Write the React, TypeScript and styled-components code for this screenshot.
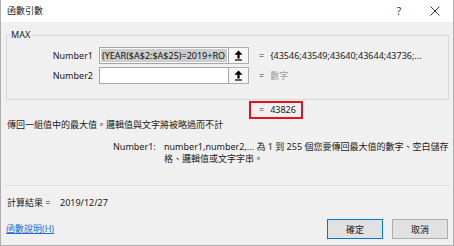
import React from "react";
import styled, { createGlobalStyle } from "styled-components";

const Global = createGlobalStyle`
  html, body { margin: 0; padding: 0; background: #f0f0f0; }
  body {
    font-family: "Noto Sans", "Noto Sans CJK TC", sans-serif;
    font-size: 9px;
    color: #1a1a1a;
  }
  * { box-sizing: border-box; }
`;

const Window = styled.div`
  width: 454px;
  height: 246px;
  display: flex;
  flex-direction: column;
  background: #f0f0f0;
  border-left: 1px solid #aeaeae;
  border-right: 1px solid #aeaeae;
  border-bottom: 1px solid #aeaeae;
  overflow: hidden;
`;

const TitleBar = styled.div`
  height: 22px;
  flex: none;
  display: flex;
  align-items: center;
  background: #ffffff;
  padding-left: 6px;
`;

const Title = styled.span`
  line-height: 12px;
  color: #222;
`;

const TitleButton = styled.div<{ $first?: boolean }>`
  width: 36px;
  height: 22px;
  display: flex;
  align-items: center;
  justify-content: center;
  margin-left: ${(p) => (p.$first ? "auto" : "0")};
  color: #333;
  font-size: 10px;
`;

const Content = styled.div`
  flex: 1;
  display: flex;
  flex-direction: column;
  padding: 0 4px 0 5px;
`;

const Group = styled.fieldset`
  margin: 7px 0 0;
  padding: 6px 0 15px;
  border: 1px solid #dadada;
  min-width: 0;
  display: flex;
  flex-direction: column;
  gap: 3px;
`;

const Legend = styled.legend`
  margin-left: 3px;
  padding: 0 1px;
  line-height: 12px;
  font-size: 9px;
  color: #222;
`;

const ArgRow = styled.div`
  display: flex;
  align-items: center;
  height: 17px;
`;

const ArgLabel = styled.div`
  width: 86px;
  text-align: right;
  line-height: 12px;
`;

const InputBox = styled.div`
  width: 130px;
  height: 17px;
  margin-left: 6px;
  border: 1px solid #a6a6a6;
  background: #ffffff;
  padding: 1px;
  overflow: hidden;
  display: flex;
`;

const InputText = styled.div<{ $selected?: boolean }>`
  flex: 1;
  min-width: 0;
  white-space: nowrap;
  overflow: hidden;
  line-height: 13px;
  padding-left: 1px;
  background: ${(p) => (p.$selected ? "#cdcdcd" : "transparent")};
  color: #111;
`;

const ArrowButton = styled.div`
  width: 20px;
  height: 17px;
  border: 1px solid #adadad;
  border-left: none;
  background: #f7f7f7;
  display: flex;
  align-items: center;
  justify-content: center;
`;

const Eq = styled.span`
  margin-left: 10px;
  line-height: 12px;
  color: #333;
`;

const ArgValue = styled.span<{ $hint?: boolean }>`
  margin-left: 6px;
  line-height: 12px;
  white-space: nowrap;
  color: ${(p) => (p.$hint ? "#a0a0a0" : "#1a1a1a")};
`;

const ResultBox = styled.div`
  margin: 1px 0 0 243px;
  width: 54px;
  height: 18px;
  border: 2px solid #e0141e;
  display: flex;
  align-items: center;
  padding-left: 8px;
`;

const ResultEq = styled.span`
  line-height: 12px;
  color: #333;
`;

const Description = styled.div`
  padding-left: 1px;
  line-height: 12px;
`;

const ArgHelp = styled.div`
  margin-top: 10px;
  display: flex;
  padding-left: 107px;
  line-height: 12px;
`;

const ArgHelpLabel = styled.div`
  width: 51px;
  flex: none;
`;

const ArgHelpText = styled.div`
  white-space: nowrap;
`;

const Separator = styled.div`
  margin-top: 20px;
  border-top: 1px solid #dcdcdc;
  border-bottom: 1px solid #f8f8f8;
`;

const ResultLine = styled.div`
  margin-top: 10px;
  padding-left: 1px;
  display: flex;
  line-height: 12px;
`;

const ResultLabel = styled.span`
  width: 53px;
`;

const Footer = styled.div`
  margin-top: 10px;
  display: flex;
  align-items: center;
  padding-right: 1px;
`;

const HelpLink = styled.a`
  color: #1f6fd0;
  text-decoration: underline;
  line-height: 12px;
  cursor: pointer;
`;

const Buttons = styled.div`
  margin-left: auto;
  display: flex;
  gap: 9px;
`;

const DialogButton = styled.button<{ $default?: boolean }>`
  width: 56px;
  height: 20px;
  padding: 0;
  font: inherit;
  color: #1a1a1a;
  background: #e1e1e1;
  border: 1px solid ${(p) => (p.$default ? "#0078d7" : "#adadad")};
`;

const UploadIcon = () => (
  <svg width="9" height="11" viewBox="0 0 9 11">
    <polygon points="4.5,0.5 8.5,4.8 0.5,4.8" fill="#000" />
    <rect x="3.4" y="4.5" width="2.2" height="4" fill="#000" />
    <rect x="1" y="9.4" width="7" height="1.2" fill="#000" />
  </svg>
);

const CloseIcon = () => (
  <svg width="10" height="10" viewBox="0 0 10 10">
    <path d="M0.5 0.5 L9.5 9.5 M9.5 0.5 L0.5 9.5" stroke="#333" strokeWidth="1" />
  </svg>
);

export default function App() {
  return (
    <>
      <Global />
      <Window>
        <TitleBar>
          <Title>函數引數</Title>
          <TitleButton $first>?</TitleButton>
          <TitleButton>
            <CloseIcon />
          </TitleButton>
        </TitleBar>
        <Content>
          <Group>
            <Legend>MAX</Legend>
            <ArgRow>
              <ArgLabel>Number1</ArgLabel>
              <InputBox>
                <InputText $selected>(YEAR($A$2:$A$25)=2019+RO</InputText>
              </InputBox>
              <ArrowButton>
                <UploadIcon />
              </ArrowButton>
              <Eq>=</Eq>
              <ArgValue>{"{43546;43549;43640;43644;43736;..."}</ArgValue>
            </ArgRow>
            <ArgRow>
              <ArgLabel>Number2</ArgLabel>
              <InputBox>
                <InputText />
              </InputBox>
              <ArrowButton>
                <UploadIcon />
              </ArrowButton>
              <Eq>=</Eq>
              <ArgValue $hint>數字</ArgValue>
            </ArgRow>
          </Group>
          <ResultBox>
            <ResultEq>=</ResultEq>
            <ArgValue>43826</ArgValue>
          </ResultBox>
          <Description>傳回一組值中的最大值。邏輯值與文字將被略過而不計</Description>
          <ArgHelp>
            <ArgHelpLabel>Number1:</ArgHelpLabel>
            <ArgHelpText>
              number1,number2,... 為 1 到 255 個您要傳回最大值的數字、空白儲存
              <br />
              格、邏輯值或文字字串。
            </ArgHelpText>
          </ArgHelp>
          <Separator />
          <ResultLine>
            <ResultLabel>計算結果 =</ResultLabel>
            <span>2019/12/27</span>
          </ResultLine>
          <Footer>
            <HelpLink>函數說明(H)</HelpLink>
            <Buttons>
              <DialogButton $default>確定</DialogButton>
              <DialogButton>取消</DialogButton>
            </Buttons>
          </Footer>
        </Content>
      </Window>
    </>
  );
}
